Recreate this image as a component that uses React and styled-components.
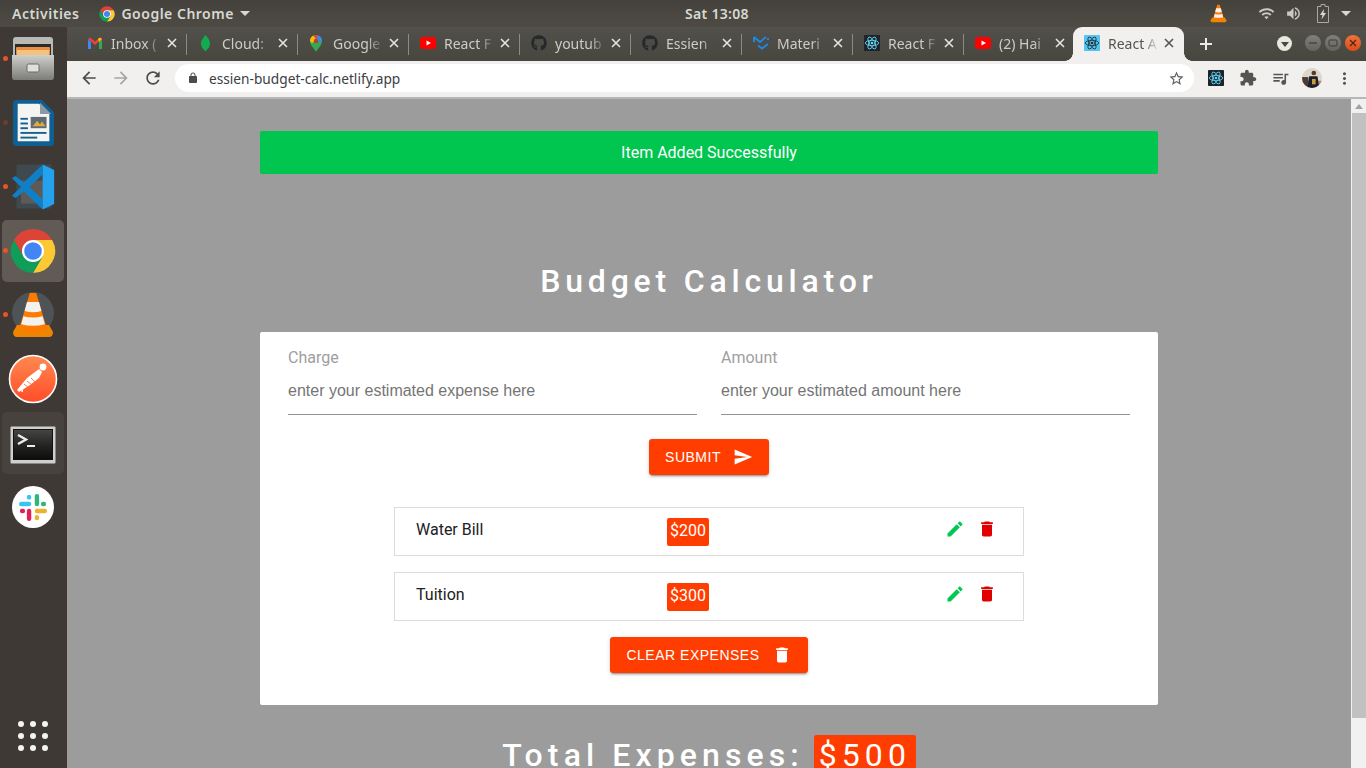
// App.jsx
import React from "react";
import styled, { createGlobalStyle, css } from "styled-components";
import { FaGithub } from "react-icons/fa";

const GlobalStyle = createGlobalStyle`
  html, body {
    margin: 0;
    padding: 0;
    height: 100%;
    overflow: hidden;
    font-family: Roboto, "Noto Sans", sans-serif;
  }
  * { box-sizing: border-box; }
`;

const Screen = styled.div`
  width: 1366px;
  height: 768px;
  display: flex;
  flex-direction: column;
  overflow: hidden;
  background: #3e3935;
`;

/* ---------- gnome top bar ---------- */
const TopBar = styled.header`
  height: 27px;
  flex: none;
  display: flex;
  align-items: center;
  padding: 0 15px 0 12px;
  background: linear-gradient(#44413c, #4a4841 60%, #4c4a43);
  color: #d8d8d3;
  font-family: "Noto Sans", sans-serif;
  font-size: 14px;
  font-weight: 600;
  letter-spacing: 0.5px;
`;

const TopLeft = styled.div`
  width: 673px;
  display: flex;
  align-items: center;
`;

const AppMenu = styled.div`
  display: flex;
  align-items: center;
  gap: 6px;
  margin-left: 20px;
`;

const Caret = styled.span`
  width: 0;
  height: 0;
  border-left: 5px solid transparent;
  border-right: 5px solid transparent;
  border-top: 5px solid #d8d8d3;
`;

const Clock = styled.div`
  letter-spacing: 0.3px;
`;

const Tray = styled.div`
  margin-left: auto;
  display: flex;
  align-items: center;
  gap: 10px;
  color: #c9c9c4;
`;

const TrayCone = styled.span`
  display: flex;
  margin-right: 20px;
`;

const TrayBattery = styled.span`
  display: flex;
  margin: 0 2px 0 5px;
`;

/* ---------- main area ---------- */
const Desktop = styled.div`
  flex: 1;
  min-height: 0;
  display: flex;
`;

const Dock = styled.nav`
  width: 67px;
  flex: none;
  display: flex;
  flex-direction: column;
  gap: 2px;
  padding: 1px 3px 0 2px;
  background: #3e3935;
  position: relative;
`;

const DockItem = styled.div`
  height: 62px;
  flex: none;
  display: flex;
  align-items: center;
  justify-content: center;
  border-radius: 5px;
  position: relative;
  background: ${(p) =>
    p.$active ? "#625a55" : p.$soft ? "#47423e" : "transparent"};
`;

const RunDot = styled.span`
  position: absolute;
  left: 1px;
  top: 28px;
  width: 5px;
  height: 5px;
  border-radius: 50%;
  background: ${(p) => (p.$dim ? "#6b3f2a" : "#e95420")};
`;

const AppGrid = styled.div`
  position: absolute;
  left: 18px;
  top: 694px;
  display: grid;
  grid-template-columns: repeat(3, 6px);
  gap: 6px;
`;

const GridDot = styled.span`
  width: 6px;
  height: 6px;
  border-radius: 50%;
  background: #f4f4f2;
`;

const Browser = styled.div`
  flex: 1;
  min-width: 0;
  display: flex;
  flex-direction: column;
`;

/* ---------- tab strip ---------- */
const TabStrip = styled.div`
  height: 34px;
  flex: none;
  display: flex;
  align-items: flex-end;
  padding-left: 9px;
  background: linear-gradient(#52504a, #47463f);
`;

const activeTab = css`
  margin-left: -2px;
  color: #55544f;
  background: #f1f0ee;
  border-radius: 9px 9px 0 0;

  &::before,
  &::after {
    content: "";
    position: absolute;
    bottom: 0;
    width: 8px;
    height: 8px;
  }
  &::before {
    left: -8px;
    background: radial-gradient(circle at 0 0, transparent 7.5px, #f1f0ee 8px);
  }
  &::after {
    right: -8px;
    background: radial-gradient(circle at 100% 0, transparent 7.5px, #f1f0ee 8px);
  }
`;

const plainTab = css`
  color: #cdccc6;

  &::after {
    content: "";
    position: absolute;
    right: 0;
    top: 7px;
    bottom: 6px;
    width: 1px;
    background: #8b8a83;
  }
`;

const Tab = styled.div`
  width: 111px;
  height: 34px;
  flex: none;
  display: flex;
  align-items: center;
  padding: 0 10px 2px 11px;
  position: relative;
  font-family: "Noto Sans", sans-serif;
  font-size: 14px;
  ${(p) => (p.$active ? activeTab : plainTab)}
`;

const TabIcon = styled.span`
  width: 16px;
  height: 16px;
  flex: none;
  display: flex;
  align-items: center;
  justify-content: flex-start;
  color: #24292e;
  font-size: 16px;
`;

const TabTitle = styled.span`
  flex: 1;
  min-width: 0;
  margin-left: 8px;
  white-space: nowrap;
  -webkit-mask-image: linear-gradient(90deg, #000 68%, transparent 100%);
  mask-image: linear-gradient(90deg, #000 68%, transparent 100%);
`;

const TabClose = styled.svg`
  width: 10px;
  height: 10px;
  flex: none;
  margin-left: 5px;
  stroke: ${(p) => (p.$active ? "#55544f" : "#e6e5e0")};
  stroke-width: 1.6;
`;

const NewTab = styled.svg`
  width: 14px;
  height: 14px;
  margin: 0 0 10px 15px;
  stroke: #ecebe6;
  stroke-width: 2;
`;

const WindowControls = styled.div`
  margin-left: auto;
  display: flex;
  align-items: center;
  gap: 4px;
  padding: 0 5px 10px 0;
`;

const TabMenu = styled.span`
  width: 15px;
  height: 15px;
  margin-right: 9px;
  border-radius: 50%;
  background: #e9e8df;
  display: flex;
  align-items: center;
  justify-content: center;
`;

const TabMenuArrow = styled.span`
  width: 0;
  height: 0;
  margin-top: 2px;
  border-left: 4px solid transparent;
  border-right: 4px solid transparent;
  border-top: 5px solid #47463f;
`;

const WinButton = styled.span`
  width: 16px;
  height: 16px;
  border-radius: 50%;
  display: flex;
  align-items: center;
  justify-content: center;
  background: ${(p) =>
    p.$close
      ? "linear-gradient(#f0743b, #dc4a1c)"
      : "linear-gradient(#807f78, #64635c)"};
`;

/* ---------- toolbar ---------- */
const Toolbar = styled.div`
  height: 38px;
  flex: none;
  display: flex;
  align-items: center;
  padding: 0 0 2px 10px;
  background: #f1f0ee;
  border-bottom: 2px solid #b7b7b5;
`;

const NavButton = styled.button`
  width: 24px;
  height: 24px;
  margin-right: 8px;
  padding: 2px;
  border: none;
  background: none;
  display: flex;
  color: ${(p) => (p.$off ? "#a5a5a3" : "#4c4c4a")};
`;

const Omnibox = styled.div`
  width: 1019px;
  height: 28px;
  margin-left: 2px;
  display: flex;
  align-items: center;
  padding: 0 9px 0 12px;
  border-radius: 14px;
  background: #fff;
  color: #3c4043;
  font-family: "Noto Sans", sans-serif;
  font-size: 13.7px;
`;

const Url = styled.span`
  flex: 1;
  margin-left: 10px;
`;

const ToolIcons = styled.div`
  display: flex;
  align-items: center;
  margin-left: 12px;
  gap: 12px;
  color: #55554f;
`;

const ToolIcon = styled.span`
  width: 20px;
  height: 20px;
  display: flex;
  align-items: center;
  justify-content: center;
`;

/* ---------- page ---------- */
const Viewport = styled.div`
  flex: 1;
  min-height: 0;
  display: flex;
`;

const Page = styled.main`
  flex: 1;
  min-width: 0;
  overflow: hidden;
  background: #9c9c9c;
  padding-top: 32px;
`;

const Container = styled.div`
  width: 898px;
  margin: 0 auto;
`;

const Alert = styled.div`
  height: 43px;
  display: flex;
  align-items: center;
  justify-content: center;
  border-radius: 2px;
  background: #00c54f;
  color: #fff;
  font-size: 16px;
`;

const Title = styled.h1`
  margin: 87px 0 30px;
  height: 41px;
  line-height: 41px;
  text-align: center;
  color: #fff;
  font-size: 32px;
  font-weight: 500;
  letter-spacing: 4.8px;
`;

const Card = styled.section`
  height: 373px;
  padding: 15px 28px 0;
  border-radius: 2px;
  background: #fff;
`;

const FieldRow = styled.div`
  display: grid;
  grid-template-columns: 1fr 1fr;
  gap: 24px;
`;

const Field = styled.label`
  display: flex;
  flex-direction: column;
`;

const FieldLabel = styled.span`
  height: 22px;
  line-height: 22px;
  font-size: 16px;
  color: #9e9e9e;
`;

const FieldInput = styled.input`
  height: 46px;
  padding: 0 0 2px;
  border: none;
  border-bottom: 1px solid #949494;
  outline: none;
  background: none;
  font-family: "Liberation Sans", sans-serif;
  font-size: 16px;
  color: #333;

  &::placeholder {
    color: #757575;
    opacity: 1;
  }
`;

const Center = styled.div`
  display: flex;
  justify-content: center;
`;

const ActionButton = styled.button`
  height: 36px;
  display: flex;
  align-items: center;
  gap: 12px;
  padding: 0 16px;
  margin-top: ${(p) => p.$top}px;
  border: none;
  border-radius: 3px;
  background: #ff3d00;
  color: #fff;
  font-family: "Liberation Sans", sans-serif;
  font-size: 14px;
  letter-spacing: 0.5px;
  box-shadow: 0 3px 1px -2px rgba(0, 0, 0, 0.2), 0 2px 2px 0 rgba(0, 0, 0, 0.14),
    0 1px 5px 0 rgba(0, 0, 0, 0.12);
`;

const ExpenseList = styled.ul`
  width: 630px;
  margin: 32px auto 0;
  padding: 0;
  list-style: none;
  display: flex;
  flex-direction: column;
  gap: 16px;
`;

const ExpenseRow = styled.li`
  height: 49px;
  display: grid;
  grid-template-columns: 251px 1fr auto;
  align-items: center;
  padding: 0 26px 0 21px;
  border: 1px solid #dcdcdc;
  color: #212121;
  font-size: 16px;
`;

const ExpenseName = styled.span`
  margin-top: -4px;
`;

const Amount = styled.span`
  width: 42px;
  height: 28px;
  display: flex;
  align-items: center;
  justify-content: center;
  padding-bottom: 2px;
  border-radius: 2px;
  background: #ff3d00;
  color: #fff;
  font-size: 16px;
`;

const RowActions = styled.div`
  display: flex;
  gap: 12px;
  margin-top: -6px;
`;

const RowIcon = styled.svg`
  width: 20px;
  height: 20px;
  display: block;
  fill: ${(p) => p.$color};
`;

const Total = styled.h2`
  margin: 30px 0 0;
  display: flex;
  align-items: flex-start;
  justify-content: center;
  gap: 10px;
  color: #fff;
  font-size: 32px;
  font-weight: 500;
  letter-spacing: 5.1px;
  line-height: 41px;
`;

const TotalAmount = styled.span`
  width: 102px;
  height: 41px;
  display: flex;
  justify-content: center;
  border-radius: 2px;
  background: #ff3d00;
  font-weight: 400;
`;

/* ---------- scrollbar ---------- */
const Scrollbar = styled.div`
  width: 15px;
  flex: none;
  display: flex;
  flex-direction: column;
  align-items: stretch;
  background: #f1f1f1;
`;

const ScrollArrow = styled.span`
  height: 14px;
  flex: none;
  display: flex;
  align-items: center;
  justify-content: center;

  &::before {
    content: "";
    border-left: 4px solid transparent;
    border-right: 4px solid transparent;
    border-bottom: 5px solid #a3a3a3;
  }
`;

const ScrollThumb = styled.span`
  height: 605px;
  margin-left: 1px;
  background: #c1c1c1;
`;

/* ---------- drawings ---------- */
const ChromeLogo = ({ size }) => (
  <svg width={size} height={size} viewBox="0 0 100 100">
    <path d="M91.6 26A48 48 0 0 0 8.4 26L29.2 62 50 26Z" fill="#db4437" />
    <path d="M91.6 26A48 48 0 0 1 50 98L70.8 62 50 26Z" fill="#fcc934" />
    <path d="M50 98A48 48 0 0 1 8.4 26L29.2 62H70.8Z" fill="#0f9d58" />
    <circle cx="50" cy="50" r="24" fill="#fff" />
    <circle cx="50" cy="50" r="19" fill="#4285f4" />
  </svg>
);

const VlcCone = ({ size, halo }) => (
  <svg width={size} height={size} viewBox="0 0 24 24">
    {halo && <circle cx="12" cy="11" r="10.5" fill="#4d5357" />}
    <path d="M2 20.5 4 17H20L22 20.5Q22 23 20 23H4Q2 23 2 20.5Z" fill="#ef8400" />
    <path d="M10.4 1H13.6L19 19Q12 22 5 19Z" fill="#ff7a00" />
    <path d="M9 5.5H15L16.2 10Q12 11.2 7.8 10Z" fill="#f2f2ee" />
    <path d="M7.2 12.6Q12 14 16.8 12.6L17.9 16.6Q12 18.2 6.1 16.6Z" fill="#f2f2ee" />
  </svg>
);

const BatteryIcon = () => (
  <svg width="12" height="19" viewBox="0 0 12 19">
    <path d="M4 .5H8V2.5H11.5V18.5H.5V2.5H4Z" fill="none" stroke="#a9a9a4" />
    <path d="M7 5 3 11H5.5L4.5 15.5 9 9H6.5Z" fill="#d8d8d3" />
  </svg>
);

const FilesIcon = () => (
  <svg width="42" height="44" viewBox="0 0 42 44">
    <defs>
      <linearGradient id="cabinet" x1="0" y1="0" x2="0" y2="1">
        <stop offset="0" stopColor="#cfcfcc" />
        <stop offset="1" stopColor="#7c7c79" />
      </linearGradient>
    </defs>
    <rect x="1" y="0" width="40" height="43" rx="3" fill="#b9b9b6" />
    <rect x="3" y="7" width="36" height="12" fill="#2b2b2a" />
    <rect x="4" y="10" width="34" height="8" rx="1" fill="#e98f43" />
    <rect x="5" y="13" width="32" height="5" fill="#f5c27e" />
    <path d="M0 18H42V40Q42 43 39 43H3Q0 43 0 40Z" fill="url(#cabinet)" />
    <rect x="15" y="27" width="12" height="8" rx="1.5" fill="#dfdfdb" stroke="#6a6a67" />
  </svg>
);

const WriterIcon = () => (
  <svg width="41" height="47" viewBox="0 0 44 50" preserveAspectRatio="none">
    <path d="M4 0H31L44 13V45Q44 49 40 49H4Q0 49 0 45V4Q0 0 4 0Z" fill="#0f5f93" />
    <path d="M5 4H28L39 15V44H5Z" fill="#f4f4f2" />
    <path d="M29 3 41 15H29Z" fill="#8d9aa4" />
    <rect x="19" y="18" width="17" height="12" fill="#5d6b74" />
    <path d="M21 28 26 22 29 26 31 23 35 28Z" fill="#e5a93a" />
    <g fill="#15608f">
      <rect x="8" y="19" width="8" height="2" />
      <rect x="8" y="24" width="8" height="2" />
      <rect x="8" y="29" width="8" height="2" />
      <rect x="8" y="34" width="28" height="2" />
      <rect x="8" y="39" width="18" height="2" />
    </g>
  </svg>
);

const CodeIcon = () => (
  <svg width="46" height="48" viewBox="0 0 100 104">
    <rect x="14" y="3" width="76" height="96" rx="4" fill="#3e4a50" />
    <rect x="24" y="38" width="60" height="50" fill="#5e5b57" />
    <path d="M71 25V3L30 42 12 28 4 33 24 52 4 71 12 76 30 62 71 101V79L42 52Z" fill="#0f7fc8" />
    <path d="M71 3 96 15V89L71 101Z" fill="#25a2ee" />
  </svg>
);

const PostmanIcon = () => (
  <svg width="50" height="50" viewBox="0 0 50 50">
    <defs>
      <linearGradient id="postman" x1="0" y1="0" x2="0" y2="1">
        <stop offset="0" stopColor="#ff8a50" />
        <stop offset="1" stopColor="#ff4c28" />
      </linearGradient>
    </defs>
    <circle cx="25" cy="25" r="23.5" fill="url(#postman)" stroke="#fff" strokeWidth="1.6" />
    <circle cx="35" cy="13" r="3.4" fill="#fff" />
    <path d="M31 15 19 24 9 36 11 38 22 31 31 24 34 18Z" fill="#fff" />
    <path d="M19 27 24 31M16 30 21 34M23 24 27 28" stroke="#ff6a3c" strokeWidth="0.9" fill="none" />
    <path d="M15 32 14 38" stroke="#fff" strokeWidth="1.4" fill="none" />
  </svg>
);

const TerminalSvg = styled.svg`
  margin-top: 3px;
`;

const TerminalIcon = () => (
  <TerminalSvg width="46" height="38" viewBox="0 0 46 38">
    <defs>
      <linearGradient id="termInner" x1="0" y1="0" x2="0" y2="1">
        <stop offset="0" stopColor="#454543" />
        <stop offset="0.55" stopColor="#222221" />
        <stop offset="1" stopColor="#0e0e0e" />
      </linearGradient>
    </defs>
    <rect x="0.5" y="0.5" width="45" height="37" rx="1" fill="#cfcfcc" />
    <rect x="3" y="3" width="40" height="31" fill="#111" />
    <rect x="4" y="4" width="38" height="29" fill="url(#termInner)" />
    <path d="M8 9 16 13.5 8 18" stroke="#ecece9" strokeWidth="2.4" fill="none" />
    <rect x="17" y="19" width="8" height="2" fill="#ecece9" />
  </TerminalSvg>
);

const SlackIcon = () => (
  <svg width="42" height="42" viewBox="0 0 48 48">
    <circle cx="24" cy="24" r="24" fill="#fff" />
    <rect x="8" y="18" width="14" height="5" rx="2.5" fill="#36c5f0" />
    <rect x="17" y="10" width="5" height="5.5" rx="2.5" fill="#36c5f0" />
    <rect x="26" y="9" width="5" height="14" rx="2.5" fill="#2eb67d" />
    <rect x="33" y="18" width="6" height="5" rx="2.5" fill="#2eb67d" />
    <rect x="26" y="26" width="14" height="5" rx="2.5" fill="#ecb22e" />
    <rect x="26" y="33" width="5" height="6" rx="2.5" fill="#ecb22e" />
    <rect x="17" y="26" width="5" height="14" rx="2.5" fill="#e01e5a" />
    <rect x="9" y="26" width="6" height="5" rx="2.5" fill="#e01e5a" />
  </svg>
);

const GmailIcon = () => (
  <svg width="15" height="12" viewBox="-1 0 15 12">
    <path d="M0 2V12H3V5Z" fill="#4285f4" />
    <path d="M14 2V12H11V5Z" fill="#34a853" />
    <path d="M0 2 2 .5 7 4.5 12 .5 14 2 7 8Z" fill="#ea4335" />
    <path d="M11 5 14 2 12 .5 10 2Z" fill="#fbbc04" />
  </svg>
);

const LeafIcon = () => (
  <svg width="12" height="17" viewBox="-3 0 12 17">
    <path d="M4.5 0C7.2 3 9 5.5 9 8.5 9 12 6.5 14 4.5 16.5 2.5 14 0 12 0 8.5 0 5.5 1.8 3 4.5 0Z" fill="#13aa52" />
  </svg>
);

const MapsIcon = () => (
  <svg width="14" height="17" viewBox="-1 0 14 17">
    <path d="M6 17C4 13 0 10.5 0 6A6 6 0 0 1 12 6C12 10.5 8 13 6 17Z" fill="#34a853" />
    <path d="M0 6A6 6 0 0 1 3.5 .5L6 4 2 8.5Z" fill="#fbbc04" />
    <path d="M3.5 .5A6 6 0 0 1 8.5 .5L6 4Z" fill="#ea4335" />
    <path d="M8.5 .5A6 6 0 0 1 12 6L9.5 7 6 4Z" fill="#4285f4" />
    <circle cx="6" cy="6" r="2.2" fill="#c6392c" />
  </svg>
);

const YoutubeIcon = () => (
  <svg width="16" height="12" viewBox="0 0 16 12">
    <rect width="16" height="12" rx="3" fill="#f00" />
    <path d="M6.5 3.5 11 6 6.5 8.5Z" fill="#fff" />
  </svg>
);

const MuiIcon = () => (
  <svg width="16" height="14" viewBox="0 0 16 14">
    <path
      d="M1 1V6M1 1 7 6 13 1M5 9.5 9 12.5 15 8M15 2V4"
      stroke="#1e88e5"
      strokeWidth="1.9"
      fill="none"
    />
  </svg>
);

const ReactIcon = ({ light, size = 16 }) => (
  <svg width={size} height={size} viewBox="0 0 24 24">
    <rect width="24" height="24" rx="1" fill={light ? "#53c6f2" : "#20232a"} />
    <g fill="none" stroke={light ? "#20333d" : "#61dafb"} strokeWidth="1.3">
      <ellipse cx="12" cy="12" rx="10" ry="4" />
      <ellipse cx="12" cy="12" rx="10" ry="4" transform="rotate(60 12 12)" />
      <ellipse cx="12" cy="12" rx="10" ry="4" transform="rotate(120 12 12)" />
    </g>
    <circle cx="12" cy="12" r="2" fill={light ? "#20333d" : "#61dafb"} />
  </svg>
);

const Avatar = () => (
  <svg width="22" height="22" viewBox="0 0 22 22">
    <defs>
      <clipPath id="face">
        <circle cx="11" cy="11" r="11" />
      </clipPath>
    </defs>
    <g clipPath="url(#face)">
      <rect width="22" height="22" fill="#dcd6cb" />
      <rect y="14" width="22" height="8" fill="#b08d6d" />
      <rect x="0" y="10" width="7" height="12" fill="#4b3c33" />
      <path d="M8 9H17L19 22H6Z" fill="#1b1f2c" />
      <circle cx="13" cy="5.5" r="2.6" fill="#5a3a28" />
      <rect x="11" y="12" width="4" height="6" fill="#c99b3d" />
    </g>
  </svg>
);

const MuiPath = ({ d, size = 24, color = "currentColor" }) => (
  <svg width={size} height={size} viewBox="0 0 24 24" fill={color}>
    <path d={d} />
  </svg>
);

const ICONS = {
  send: "M2.01 21L23 12 2.01 3 2 10l15 2-15 2z",
  edit: "M3 17.25V21h3.75L17.81 9.94l-3.75-3.75L3 17.25zM20.71 7.04c.39-.39.39-1.02 0-1.41l-2.34-2.34c-.39-.39-1.02-.39-1.41 0l-1.83 1.83 3.75 3.75 1.83-1.83z",
  trash: "M6 19c0 1.1.9 2 2 2h8c1.1 0 2-.9 2-2V7H6v12zM19 4h-3.5l-1-1h-5l-1 1H5v2h14V4z",
  back: "M20 11H7.83l5.59-5.59L12 4l-8 8 8 8 1.41-1.41L7.83 13H20v-2z",
  forward: "M12 4l-1.41 1.41L16.17 11H4v2h12.17l-5.58 5.59L12 20l8-8z",
  reload: "M17.65 6.35C16.2 4.9 14.21 4 12 4c-4.42 0-7.99 3.58-7.99 8s3.57 8 7.99 8c3.73 0 6.84-2.55 7.73-6h-2.08c-.82 2.33-3.04 4-5.65 4-3.31 0-6-2.69-6-6s2.69-6 6-6c1.66 0 3.14.69 4.22 1.78L13 11h7V4l-2.35 2.35z",
  lock: "M18 8h-1V6c0-2.76-2.24-5-5-5S7 3.24 7 6v2H6c-1.1 0-2 .9-2 2v10c0 1.1.9 2 2 2h12c1.1 0 2-.9 2-2V10c0-1.1-.9-2-2-2zM12 3.1c1.71 0 3.1 1.39 3.1 3.1V8H8.9V6.2c0-1.71 1.39-3.1 3.1-3.1z",
  star: "M22 9.24l-7.19-.62L12 2 9.19 8.63 2 9.24l5.46 4.73L5.82 21 12 17.27 18.18 21l-1.63-7.03L22 9.24zM12 15.4l-3.76 2.27 1-4.28-3.32-2.88 4.38-.38L12 6.1l1.71 4.04 4.38.38-3.32 2.88 1 4.28L12 15.4z",
  puzzle: "M20.5 11H19V7c0-1.1-.9-2-2-2h-4V3.5C13 2.12 11.88 1 10.5 1S8 2.12 8 3.5V5H4c-1.1 0-1.99.9-1.99 2v3.8H3.5c1.49 0 2.7 1.21 2.7 2.7s-1.21 2.7-2.7 2.7H2V20c0 1.1.9 2 2 2h3.8v-1.5c0-1.49 1.21-2.7 2.7-2.7 1.49 0 2.7 1.21 2.7 2.7V22H17c1.1 0 2-.9 2-2v-4h1.5c1.38 0 2.5-1.12 2.5-2.5S21.88 11 20.5 11z",
  queue: "M15 6H3v2h12V6zm0 4H3v2h12v-2zM3 16h8v-2H3v2zM17 6v8.18c-.31-.11-.65-.18-1-.18-1.66 0-3 1.34-3 3s1.34 3 3 3 3-1.34 3-3V8h3V6h-5z",
  dots: "M12 8c1.1 0 2-.9 2-2s-.9-2-2-2-2 .9-2 2 .9 2 2 2zm0 2c-1.1 0-2 .9-2 2s.9 2 2 2 2-.9 2-2-.9-2-2-2zm0 6c-1.1 0-2 .9-2 2s.9 2 2 2 2-.9 2-2-.9-2-2-2z",
  wifi: "M1 9l2 2c4.97-4.97 13.03-4.97 18 0l2-2C16.93 2.93 7.08 2.93 1 9zm8 8l3 3 3-3c-1.65-1.66-4.34-1.66-6 0zm-4-4l2 2c2.76-2.76 7.24-2.76 10 0l2-2C15.14 9.14 8.87 9.14 5 13z",
  volume: "M3 9v6h4l5 5V4L7 9H3zm13.5 3c0-1.77-1.02-3.29-2.5-4.03v8.05c1.48-.73 2.5-2.25 2.5-4.02zM14 3.23v2.06c2.89.86 5 3.54 5 6.71s-2.11 5.85-5 6.71v2.06c4.01-.91 7-4.49 7-8.77s-2.99-7.86-7-8.77z",
};

const tabs = [
  { title: "Inbox (", icon: <GmailIcon /> },
  { title: "Cloud:", icon: <LeafIcon /> },
  { title: "Google", icon: <MapsIcon /> },
  { title: "React F", icon: <YoutubeIcon /> },
  { title: "youtub", icon: <FaGithub /> },
  { title: "Essien", icon: <FaGithub /> },
  { title: "Materi", icon: <MuiIcon /> },
  { title: "React F", icon: <ReactIcon /> },
  { title: "(2) Hai", icon: <YoutubeIcon /> },
];

const dockApps = [
  { key: "files", icon: <FilesIcon />, dot: true },
  { key: "writer", icon: <WriterIcon />, dot: true, dim: true },
  { key: "code", icon: <CodeIcon />, dot: true },
  { key: "chrome", icon: <ChromeLogo size={46} />, dot: true, active: true },
  { key: "vlc", icon: <VlcCone size={48} halo />, dot: true },
  { key: "postman", icon: <PostmanIcon /> },
  { key: "terminal", icon: <TerminalIcon />, soft: true },
  { key: "slack", icon: <SlackIcon /> },
];

const expenses = [
  { id: 1, charge: "Water Bill", amount: 200 },
  { id: 2, charge: "Tuition", amount: 300 },
];

const CloseGlyph = ({ active }) => (
  <TabClose viewBox="0 0 10 10" $active={active}>
    <path d="M1 1 9 9M9 1 1 9" />
  </TabClose>
);

const App = () => {
  const total = expenses.reduce((sum, item) => sum + item.amount, 0);

  return (
    <Screen>
      <GlobalStyle />
      <TopBar>
        <TopLeft>
          <span>Activities</span>
          <AppMenu>
            <ChromeLogo size={16} />
            <span>Google Chrome</span>
            <Caret />
          </AppMenu>
        </TopLeft>
        <Clock>Sat 13:08</Clock>
        <Tray>
          <TrayCone>
            <VlcCone size={19} />
          </TrayCone>
          <MuiPath d={ICONS.wifi} size={17} />
          <MuiPath d={ICONS.volume} size={17} />
          <TrayBattery>
            <BatteryIcon />
          </TrayBattery>
          <Caret />
        </Tray>
      </TopBar>

      <Desktop>
        <Dock>
          {dockApps.map((app) => (
            <DockItem key={app.key} $active={app.active} $soft={app.soft}>
              {app.dot && <RunDot $dim={app.dim} />}
              {app.icon}
            </DockItem>
          ))}
          <AppGrid>
            {Array.from({ length: 9 }, (_, i) => (
              <GridDot key={i} />
            ))}
          </AppGrid>
        </Dock>

        <Browser>
          <TabStrip>
            {tabs.map((tab, i) => (
              <Tab key={i}>
                <TabIcon>{tab.icon}</TabIcon>
                <TabTitle>{tab.title}</TabTitle>
                <CloseGlyph />
              </Tab>
            ))}
            <Tab $active>
              <TabIcon>
                <ReactIcon light />
              </TabIcon>
              <TabTitle>React A</TabTitle>
              <CloseGlyph active />
            </Tab>
            <NewTab viewBox="0 0 14 14">
              <path d="M7 1V13M1 7H13" />
            </NewTab>
            <WindowControls>
              <TabMenu>
                <TabMenuArrow />
              </TabMenu>
              <WinButton>
                <svg width="10" height="10" viewBox="0 0 10 10">
                  <path d="M1 5H9" stroke="#3e3d38" strokeWidth="1.2" />
                </svg>
              </WinButton>
              <WinButton>
                <svg width="10" height="10" viewBox="0 0 10 10">
                  <rect x="1" y="2" width="8" height="6" rx="1" fill="none" stroke="#3e3d38" />
                </svg>
              </WinButton>
              <WinButton $close>
                <svg width="10" height="10" viewBox="0 0 10 10">
                  <path d="M2 2 8 8M8 2 2 8" stroke="#4b2413" strokeWidth="1.2" />
                </svg>
              </WinButton>
            </WindowControls>
          </TabStrip>

          <Toolbar>
            <NavButton>
              <MuiPath d={ICONS.back} size={20} />
            </NavButton>
            <NavButton $off>
              <MuiPath d={ICONS.forward} size={20} />
            </NavButton>
            <NavButton>
              <MuiPath d={ICONS.reload} size={20} />
            </NavButton>
            <Omnibox>
              <MuiPath d={ICONS.lock} size={12} color="#4c4c4a" />
              <Url>essien-budget-calc.netlify.app</Url>
              <MuiPath d={ICONS.star} size={17} color="#5f5f5c" />
            </Omnibox>
            <ToolIcons>
              <ToolIcon>
                <ReactIcon size={16} />
              </ToolIcon>
              <ToolIcon>
                <MuiPath d={ICONS.puzzle} size={18} />
              </ToolIcon>
              <ToolIcon>
                <MuiPath d={ICONS.queue} size={19} />
              </ToolIcon>
              <ToolIcon>
                <Avatar />
              </ToolIcon>
              <ToolIcon>
                <MuiPath d={ICONS.dots} size={19} />
              </ToolIcon>
            </ToolIcons>
          </Toolbar>

          <Viewport>
            <Page>
              <Container>
                <Alert>Item Added Successfully</Alert>
                <Title>Budget Calculator</Title>
                <Card>
                  <FieldRow>
                    <Field>
                      <FieldLabel>Charge</FieldLabel>
                      <FieldInput placeholder="enter your estimated expense here" />
                    </Field>
                    <Field>
                      <FieldLabel>Amount</FieldLabel>
                      <FieldInput placeholder="enter your estimated amount here" />
                    </Field>
                  </FieldRow>
                  <Center>
                    <ActionButton $top={24}>
                      SUBMIT
                      <MuiPath d={ICONS.send} size={20} />
                    </ActionButton>
                  </Center>
                  <ExpenseList>
                    {expenses.map((item) => (
                      <ExpenseRow key={item.id}>
                        <ExpenseName>{item.charge}</ExpenseName>
                        <Amount>${item.amount}</Amount>
                        <RowActions>
                          <RowIcon viewBox="0 0 24 24" $color="#00c853">
                            <path d={ICONS.edit} />
                          </RowIcon>
                          <RowIcon viewBox="0 0 24 24" $color="#e00000">
                            <path d={ICONS.trash} />
                          </RowIcon>
                        </RowActions>
                      </ExpenseRow>
                    ))}
                  </ExpenseList>
                  <Center>
                    <ActionButton $top={16}>
                      CLEAR EXPENSES
                      <MuiPath d={ICONS.trash} size={20} />
                    </ActionButton>
                  </Center>
                </Card>
                <Total>
                  <span>Total Expenses:</span>
                  <TotalAmount>${total}</TotalAmount>
                </Total>
              </Container>
            </Page>
            <Scrollbar>
              <ScrollArrow />
              <ScrollThumb />
            </Scrollbar>
          </Viewport>
        </Browser>
      </Desktop>
    </Screen>
  );
};

export default App;
